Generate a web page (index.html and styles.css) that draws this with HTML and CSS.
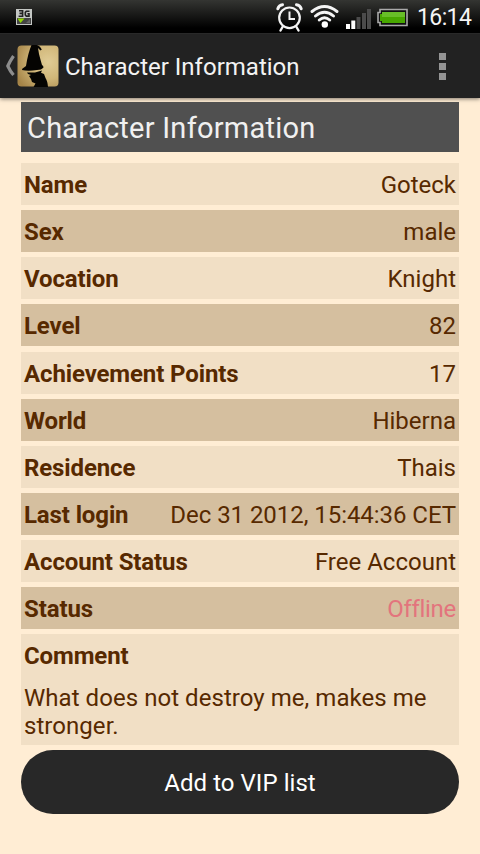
FILE: index.html
```html
<!DOCTYPE html>
<html lang="en">
<head>
<meta charset="utf-8">
<title>Character Information</title>
<link rel="stylesheet" href="styles.css">
</head>
<body>
<div class="status-bar">
  <svg class="net" width="16" height="16" viewBox="0 0 16 16"><rect width="16" height="16" fill="#c4c7c4"/><path d="M3 1.8h3.6v5.4H2.6M3.5 4.4h3M13.5 2.2h-3.2l-1 1.2v2.6l1 1.1H13V4.8h-1.6" fill="none" stroke="#222" stroke-width="1.6"/><rect x="1" y="9" width="14" height="6" fill="#444"/><path d="M1.5 9.5h7L4.500 14z" fill="#91d800"/><path d="M14 10v4h-4z" fill="#666"/></svg>
  <svg class="tray" width="136" height="33" viewBox="0 0 136 33">
    <g fill="none" stroke="#f4f4f4" stroke-linecap="round">
      <circle cx="14.500" cy="17.800" r="10.300" stroke-width="2.200"/>
      <path d="M14.500 11.500v7.500h5.500" stroke-width="2" stroke-linecap="butt"/>
      <path d="M2.800 8.700Q4 5 7.500 4.700M21.500 4.700Q25 5 26.200 8.700" stroke-width="3"/>
      <path d="M7.500 27l-2 3.500M21.500 27l2 3.500" stroke-width="2.400"/>
      <path d="M37 11.500Q49.500 1.500 62 11.500M40.500 16Q49.500 8.500 58.500 16M44.300 20Q49.500 15.500 54.700 20" stroke-width="2.900"/>
    </g>
    <circle cx="49.800" cy="24.500" r="3.200" fill="#fff"/>
    <path d="M71 24h4v5h-4zM76.300 20.500h4V29h-4z" fill="#fff"/>
    <path d="M81.500 17h4v12h-4zM87 13h4v16h-4zM92 9h4v20h-4z" fill="#4b4b4b"/>
    <path d="M105 9.500h27v16h-27v-3h-2v-10h2z" fill="#111" stroke="#aaa" stroke-width="1.600"/>
    <path d="M107 12h23v11h-23v-2h-2v-7h2z" fill="#48a800"/><path d="M107 12h23v5h-23z" fill="#68be28"/>
  </svg>
  <span class="clock">16:14</span>
</div>
<header class="action-bar">
  <svg class="up" width="11" height="22" viewBox="0 0 11 22"><path d="M8.500 1Q5 6 2.800 11Q5 16 8.500 20" fill="none" stroke="#8d8d8d" stroke-width="3.200"/></svg>
  <svg class="app-icon" width="42" height="42" viewBox="0 0 42 42">
    <defs><radialGradient id="gold" cx=".75" cy=".4" r=".85"><stop offset="0" stop-color="#e0cc96"/><stop offset=".5" stop-color="#d0b678"/><stop offset="1" stop-color="#a58448"/></radialGradient></defs>
    <rect x=".5" y=".5" width="41" height="41" rx="4" fill="url(#gold)"/>
    <path d="M14.500 0H20Q23.500 1 24.800 4.500L23.500 5.500L21 3L22 9Q23.500 15 25 20Q26.500 20.500 26.500 22.500Q24.500 25 20 25Q11 26.500 5 25Q4.500 23.500 7 22.500L9 21Q11 8 14.500 0z" fill="#050402"/>
    <path d="M10 27.500L18 27.600L25 25.500L24 27.800L27 29L28.500 33Q30.500 36 31 42H16.500L18.500 38.500L15 37L14 34L12 31L14 30L11 29z" fill="#050402"/>
  </svg>
  <h1>Character Information</h1>
  <svg class="menu" width="7" height="27" viewBox="0 0 7 27"><path d="M0 0h7v7H0zM0 10h7v7H0zM0 20h7v7H0z" fill="#949494"/></svg>
</header>
<main>
  <h2>Character Information</h2>
  <dl>
    <div class="row"><dt>Name</dt><dd>Goteck</dd></div>
    <div class="row"><dt>Sex</dt><dd>male</dd></div>
    <div class="row"><dt>Vocation</dt><dd>Knight</dd></div>
    <div class="row"><dt>Level</dt><dd>82</dd></div>
    <div class="row"><dt>Achievement Points</dt><dd>17</dd></div>
    <div class="row"><dt>World</dt><dd>Hiberna</dd></div>
    <div class="row"><dt>Residence</dt><dd>Thais</dd></div>
    <div class="row"><dt>Last login</dt><dd class="date">Dec 31 2012, 15:44:36 CET</dd></div>
    <div class="row"><dt>Account Status</dt><dd>Free Account</dd></div>
    <div class="row"><dt>Status</dt><dd class="offline">Offline</dd></div>
    <div class="row comment"><dt>Comment</dt><dd>What does not destroy me, makes me<br>stronger.</dd></div>
  </dl>
  <button type="button">Add to VIP list</button>
</main>
</body>
</html>
```
FILE: styles.css
```css
* { box-sizing: border-box; }
body { margin: 0; height: 854px; overflow: hidden; background: #ffedd4; font-family: Roboto, sans-serif; color: #572900; }
svg { display: block; flex: none; }
h1, h2, dl, dd { margin: 0; font-weight: 400; }
.status-bar { height: 33px; display: flex; align-items: center; background: linear-gradient(#343532, #000 85%); color: #f5f5f5; }
.net { margin-left: 16px; }
.tray { margin-left: 243px; }
.clock { margin-left: 6px; font-size: 23px; letter-spacing: -.6px; line-height: 33px; padding-top: 1px; white-space: nowrap; }
.action-bar { height: 65px; display: flex; align-items: center; background: #222; color: #f3f3f3; border-top: 1px solid #292929; box-shadow: 0 1px 4px rgba(0, 0, 0, .5); }
.up { margin-left: 5px; }
.app-icon { margin-left: 1px; }
h1 { margin-left: 6px; font-size: 24px; line-height: 30px; padding-top: 1px; white-space: nowrap; }
.menu { margin-left: auto; margin-right: 34px; }
main { padding: 4px 21px 0; }
h2 { height: 50px; padding-left: 6px; background: #505050; color: #f0f0f0; font-size: 29px; line-height: 53px; letter-spacing: .25px; }
dl { margin-top: 11px; display: flex; flex-direction: column; gap: 5.130px; }
.row { height: 42px; padding: 0 3px; display: flex; justify-content: space-between; background: #f1dfc5; font-size: 24px; line-height: 44px; white-space: nowrap; }
.row:nth-child(even) { background: #d5bf9f; }
dt { font-weight: 700; letter-spacing: -.12px; }
.date { letter-spacing: -.05px; }
.row .offline { color: #e3747d; font-variant-ligatures: none; letter-spacing: -.3px; }
.row.comment { height: 111px; flex-direction: column; justify-content: flex-start; }
.comment dd { margin-top: 6px; line-height: 28px; letter-spacing: .05px; }
.comment dt { line-height: 45px; margin-bottom: -1px; }
button { display: block; width: 100%; height: 64px; margin-top: 5px; border: 0; border-radius: 32px; background: #282828; color: #fff; font: 24px/64px Roboto, sans-serif; letter-spacing: .05px; padding: 1px 0 0; }
```
